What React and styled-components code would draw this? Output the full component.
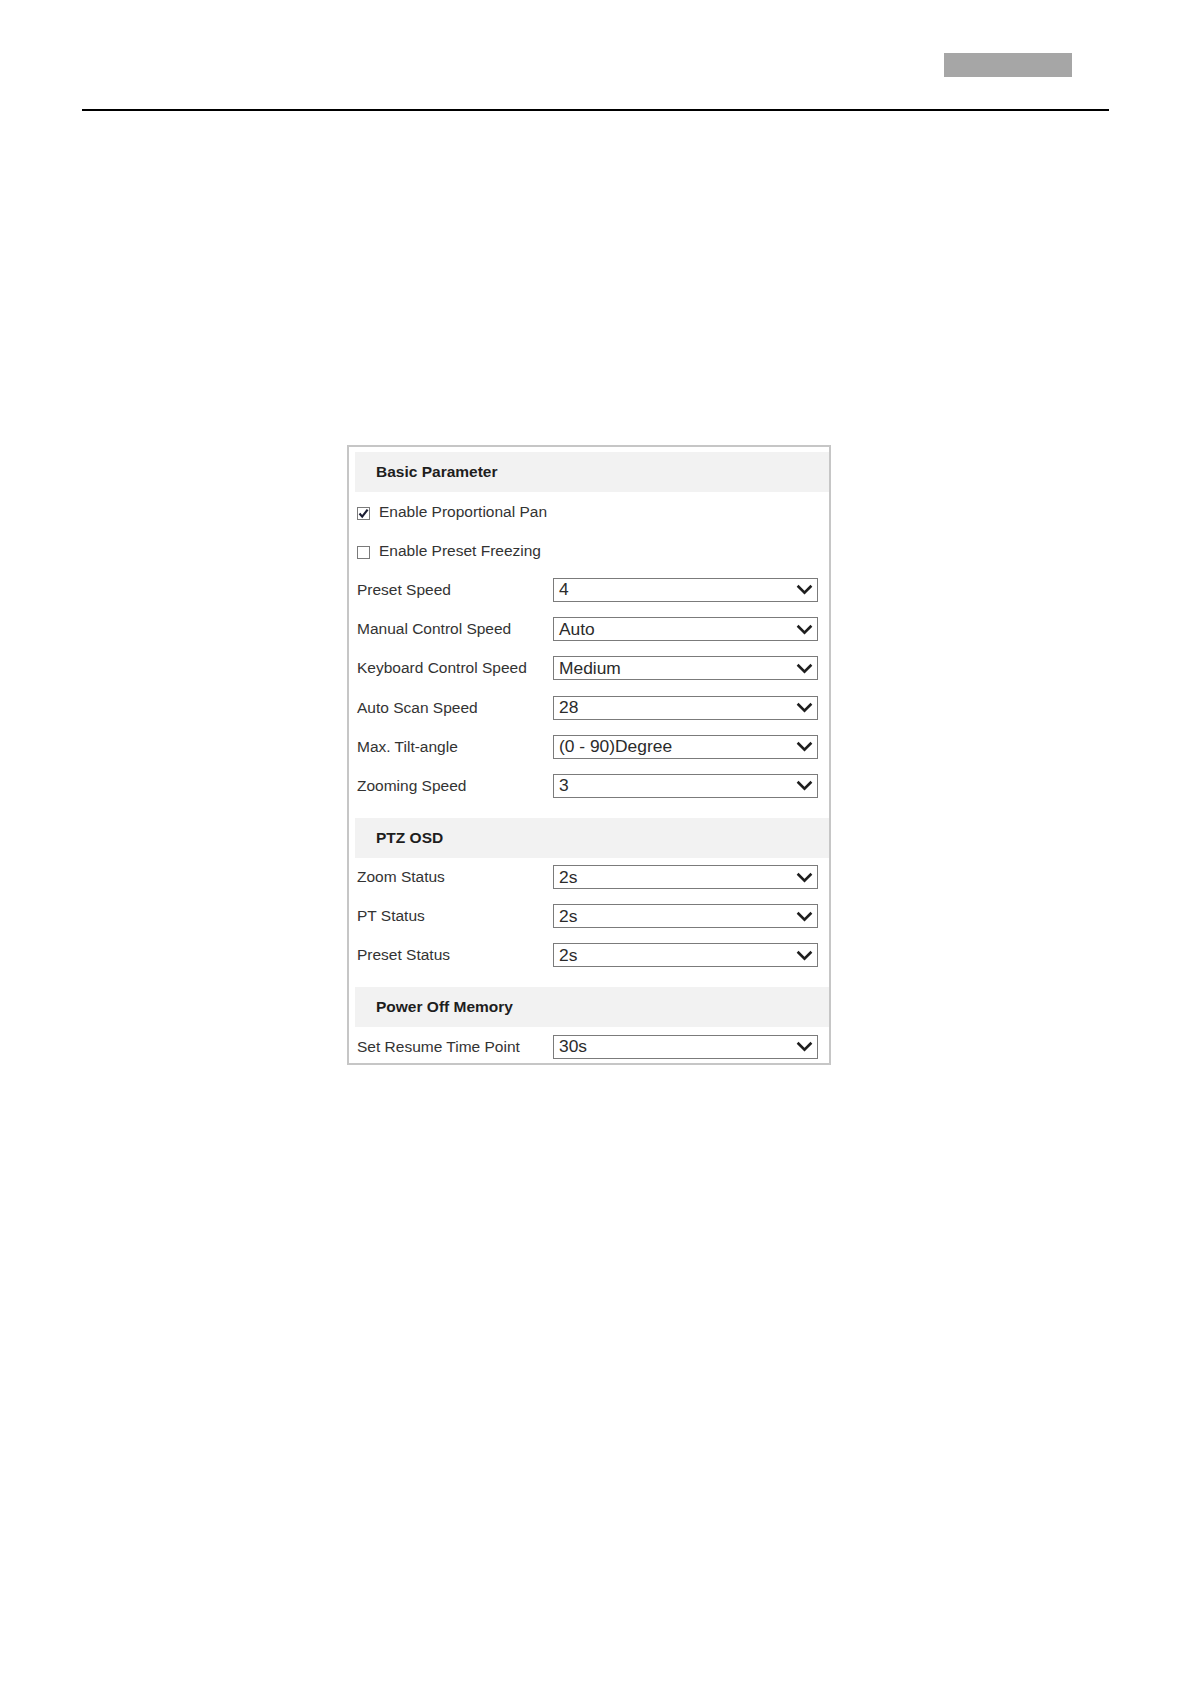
import React from 'react';
import styled, { createGlobalStyle } from 'styled-components';

const GlobalStyle = createGlobalStyle`
    html, body {
        margin: 0;
        padding: 0;
        background: #ffffff;
    }
    body {
        font-family: "Liberation Sans", Arial, sans-serif;
    }
`;

const Page = styled.div`
    width: 1191px;
    min-height: 1684px;
    background: #fff;
`;

const TopBar = styled.div`
    height: 109px;
    box-sizing: border-box;
    display: flex;
    justify-content: flex-end;
    align-items: flex-start;
    padding: 53px 119px 0 0;
`;

const Tag = styled.div`
    width: 128px;
    height: 24px;
    background: #a6a6a6;
`;

const Rule = styled.div`
    height: 2px;
    margin: 0 82px;
    background: #000;
`;

const Panel = styled.div`
    width: 484px;
    height: 620px;
    box-sizing: border-box;
    margin: 334px 0 0 347px;
    border: 2px solid #c6c6c6;
    padding: 5px 0 0 6px;
    overflow: hidden;
`;

const SectionHead = styled.div`
    height: 40px;
    margin-top: ${props => props.first ? '0' : '12px'};
    display: flex;
    align-items: center;
    padding-left: 21px;
    background: #f2f2f2;
    font-weight: bold;
    font-size: 15.5px;
    color: #1e1e1e;
`;

const Row = styled.div`
    height: 39.2px;
    display: flex;
    align-items: center;
    padding-left: 2px;
    font-size: 15.5px;
    color: #333;
`;

const Label = styled.div`
    width: 196px;
    flex-shrink: 0;
    white-space: nowrap;
`;

const Box = styled.span`
    width: 11px;
    height: 11px;
    margin: 3px 9px 0 0;
    border: 1px solid #7a7a7a;
    background: #fff;
    display: flex;
    align-items: center;
    justify-content: center;
`;

const Select = styled.div`
    width: 265px;
    height: 24px;
    box-sizing: border-box;
    border: 1px solid #7b7b7b;
    display: flex;
    align-items: center;
    justify-content: space-between;
    padding: 0 4px 0 5px;
    font-size: 17.4px;
    color: #2b2b2b;
`;

const Check = ({ checked, label }) => (
    <Row>
        <Box>
            {checked && (
                <svg width="11" height="11" viewBox="0 0 11 11">
                    <path d="M1.5 5.5 L4.2 8.6 L9.6 1.6" fill="none" stroke="#1b1d33" strokeWidth="2.2" />
                </svg>
            )}
        </Box>
        {label}
    </Row>
);

const Field = ({ label, value }) => (
    <Row>
        <Label>{label}</Label>
        <Select>
            <span>{value}</span>
            <svg width="17" height="11" viewBox="0 0 17 11">
                <path d="M1.6 1.8 L8.5 8.6 L15.4 1.8" fill="none" stroke="#1e1e1e" strokeWidth="2.6" />
            </svg>
        </Select>
    </Row>
);

const basic = [
    ['Preset Speed', '4'],
    ['Manual Control Speed', 'Auto'],
    ['Keyboard Control Speed', 'Medium'],
    ['Auto Scan Speed', '28'],
    ['Max. Tilt-angle', '(0 - 90)Degree'],
    ['Zooming Speed', '3'],
];

const osd = [
    ['Zoom Status', '2s'],
    ['PT Status', '2s'],
    ['Preset Status', '2s'],
];

export default function App() {
    return (
        <Page>
            <GlobalStyle />
            <TopBar>
                <Tag />
            </TopBar>
            <Rule />
            <Panel>
                <SectionHead first>Basic Parameter</SectionHead>
                <Check checked label="Enable Proportional Pan" />
                <Check label="Enable Preset Freezing" />
                {basic.map(([l, v]) => <Field key={l} label={l} value={v} />)}

                <SectionHead>PTZ OSD</SectionHead>
                {osd.map(([l, v]) => <Field key={l} label={l} value={v} />)}

                <SectionHead>Power Off Memory</SectionHead>
                <Field label="Set Resume Time Point" value="30s" />
            </Panel>
        </Page>
    );
}
